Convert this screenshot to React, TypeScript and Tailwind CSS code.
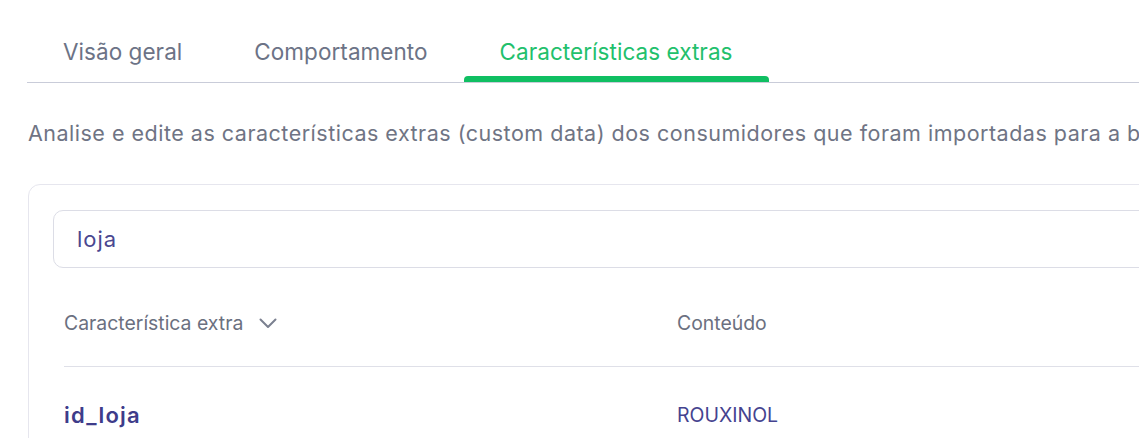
import React from "react";

const tabs = ["Visão geral", "Comportamento", "Características extras"];

function Chevron() {
  return (
    <svg width="18" height="11" viewBox="0 0 18 11" fill="none" className="shrink-0">
      <path d="M1.5 1.5 9 9l7.5-7.5" stroke="#7b8090" strokeWidth="2" strokeLinecap="round" strokeLinejoin="round" />
    </svg>
  );
}

export default function App() {
  const active = 2;
  return (
    <div className="h-[438px] w-[1139px] overflow-hidden bg-white font-['Inter',sans-serif]">
      <div className="w-[1400px] px-[28px]">
        <div className="-ml-px flex border-b border-[#c9ccd9]">
          {tabs.map((t, i) => (
            <div key={t} className="flex flex-col px-9">
              <span
                className={
                  "pt-[37px] text-[22.5px] leading-[30px] tracking-[0.05px] whitespace-nowrap " +
                  (i === active ? "text-[#22c06c]" : "text-[#6c7386]")
                }
              >
                {t}
              </span>
              <div
                className={
                  "-mx-9 mt-[9px] h-[6px] rounded-t-[4px] " + (i === active ? "bg-[#10bf62]" : "bg-transparent")
                }
              />
            </div>
          ))}
        </div>

        <p className="mt-[35px] whitespace-nowrap text-[21.5px] leading-[30px] tracking-[0.5px] text-[#6f7484]">
          Analise e edite as características extras (custom data) dos consumidores que foram importadas para a base
        </p>

        <div className="mt-[36px] rounded-[12px] border border-[#e6e6ee] px-[24px] pt-[25px] pb-6">
          <div className="flex h-[58px] items-center rounded-[10px] border border-[#dcdde6] pl-[23px] text-[22px] tracking-[1px] text-[#4a4790]">
            loja
          </div>

          <div className="ml-[11px]">
            <div className="flex border-b border-[#dfe0e8] pt-[42px] pb-[30px] text-[19.4px] leading-[26px] text-[#6b7080]">
              <div className="flex w-[613px] items-center gap-4">
                <span>Característica extra</span>
                <Chevron />
              </div>
              <div>Conteúdo</div>
            </div>
            <div className="flex pt-[33px] leading-[30px] text-[#45438f]">
              <div className="w-[613px] text-[22px] font-semibold tracking-[1.2px] text-[#3e3c8a]">id_loja</div>
              <div className="text-[19.5px]">ROUXINOL</div>
            </div>
          </div>
        </div>
      </div>
    </div>
  );
}
